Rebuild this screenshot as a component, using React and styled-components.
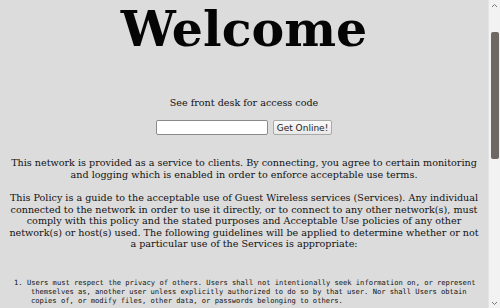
import React from "react";
import styled, { createGlobalStyle } from "styled-components";

const GlobalStyle = createGlobalStyle`
  html, body {
    margin: 0;
    padding: 0;
    overflow: hidden;
  }
  body {
    background: #dcdcdc;
    font-family: "DejaVu Serif", serif;
    color: #111;
  }
`;

const Frame = styled.div`
  display: flex;
  width: 500px;
  height: 308px;
  overflow: hidden;
`;

const Page = styled.main`
  flex: 1;
  display: flex;
  flex-direction: column;
  align-items: center;
  padding: 0 8px;
  min-width: 0;
`;

const Heading = styled.h1`
  margin: 0;
  font-size: 49px;
  line-height: 58px;
  font-weight: bold;
  color: #050505;
`;

const Hint = styled.p`
  margin: 39px 0 0;
  font-size: 9.6px;
  line-height: 12px;
`;

const Form = styled.form`
  display: flex;
  gap: 5px;
  margin-top: 11px;
`;

const CodeInput = styled.input`
  box-sizing: border-box;
  width: 112px;
  height: 15px;
  border: 1px solid #8a8a8a;
  border-radius: 2px;
  background: #fff;
  padding: 0 2px;
`;

const Button = styled.button`
  box-sizing: border-box;
  width: 59px;
  height: 15px;
  padding: 0;
  border: 1px solid #a9a9a9;
  border-radius: 2px;
  background: linear-gradient(#fafafa, #e8e8e8);
  font-family: "DejaVu Sans", sans-serif;
  font-size: 9px;
  color: #222;
`;

const Text = styled.p`
  margin: ${({ top }) => top}px 0 0;
  font-size: 9.6px;
  line-height: 11.5px;
  text-align: center;
`;

const Rules = styled.ol`
  list-style: none;
  align-self: stretch;
  margin: 28px 0 0;
  padding: 0 0 0 6px;
  font-family: "DejaVu Sans Mono", monospace;
  font-size: 7.1px;
  line-height: 9.2px;
  color: #111;
`;

const Rule = styled.li`
  display: grid;
  grid-template-columns: 13px 1fr;
`;

const RuleText = styled.span`
  padding-left: 4px;
  text-indent: -4px;
`;

const Scrollbar = styled.div`
  width: 11px;
  display: flex;
  flex-direction: column;
  align-items: center;
  background: #f2f2f2;
  border-left: 1px solid #e4e4e4;
`;

const Arrow = styled.div`
  height: 10px;
  display: flex;
  align-items: center;
  justify-content: center;
`;

const Track = styled.div`
  flex: 1;
  width: 100%;
  display: flex;
  flex-direction: column;
  align-items: center;
`;

const Thumb = styled.div`
  margin-top: 22px;
  width: 8px;
  height: 127px;
  border-radius: 2px;
  background: #6f6762;
`;

function Chevron({ up }) {
  return (
    <svg width="7" height="5" viewBox="0 0 7 5">
      <path
        d={up ? "M1 4 L3.5 1.5 L6 4" : "M1 1 L3.5 3.5 L6 1"}
        fill="none"
        stroke="#777"
        strokeWidth="1"
      />
    </svg>
  );
}

export default function App() {
  return (
    <>
      <GlobalStyle />
      <Frame>
        <Page>
          <Heading>Welcome</Heading>
          <Hint>See front desk for access code</Hint>
          <Form onSubmit={(e) => e.preventDefault()}>
            <CodeInput type="text" />
            <Button type="submit">Get Online!</Button>
          </Form>
          <Text top={22}>
            This network is provided as a service to clients. By connecting, you agree to certain monitoring
            and logging which is enabled in order to enforce acceptable use terms.
          </Text>
          <Text top={12}>
            This Policy is a guide to the acceptable use of Guest Wireless services (Services). Any individual
            connected to the network in order to use it directly, or to connect to any other network(s), must
            comply with this policy and the stated purposes and Acceptable Use policies of any other
            network(s) or host(s) used. The following guidelines will be applied to determine whether or not
            a particular use of the Services is appropriate:
          </Text>
          <Rules>
            <Rule>
              <span>1.</span>
              <RuleText>
                Users must respect the privacy of others. Users shall not intentionally seek information on, or represent
                themselves as, another user unless explicitly authorized to do so by that user. Nor shall Users obtain
                copies of, or modify files, other data, or passwords belonging to others.
              </RuleText>
            </Rule>
          </Rules>
        </Page>
        <Scrollbar>
          <Arrow><Chevron up /></Arrow>
          <Track>
            <Thumb />
          </Track>
          <Arrow><Chevron /></Arrow>
        </Scrollbar>
      </Frame>
    </>
  );
}
